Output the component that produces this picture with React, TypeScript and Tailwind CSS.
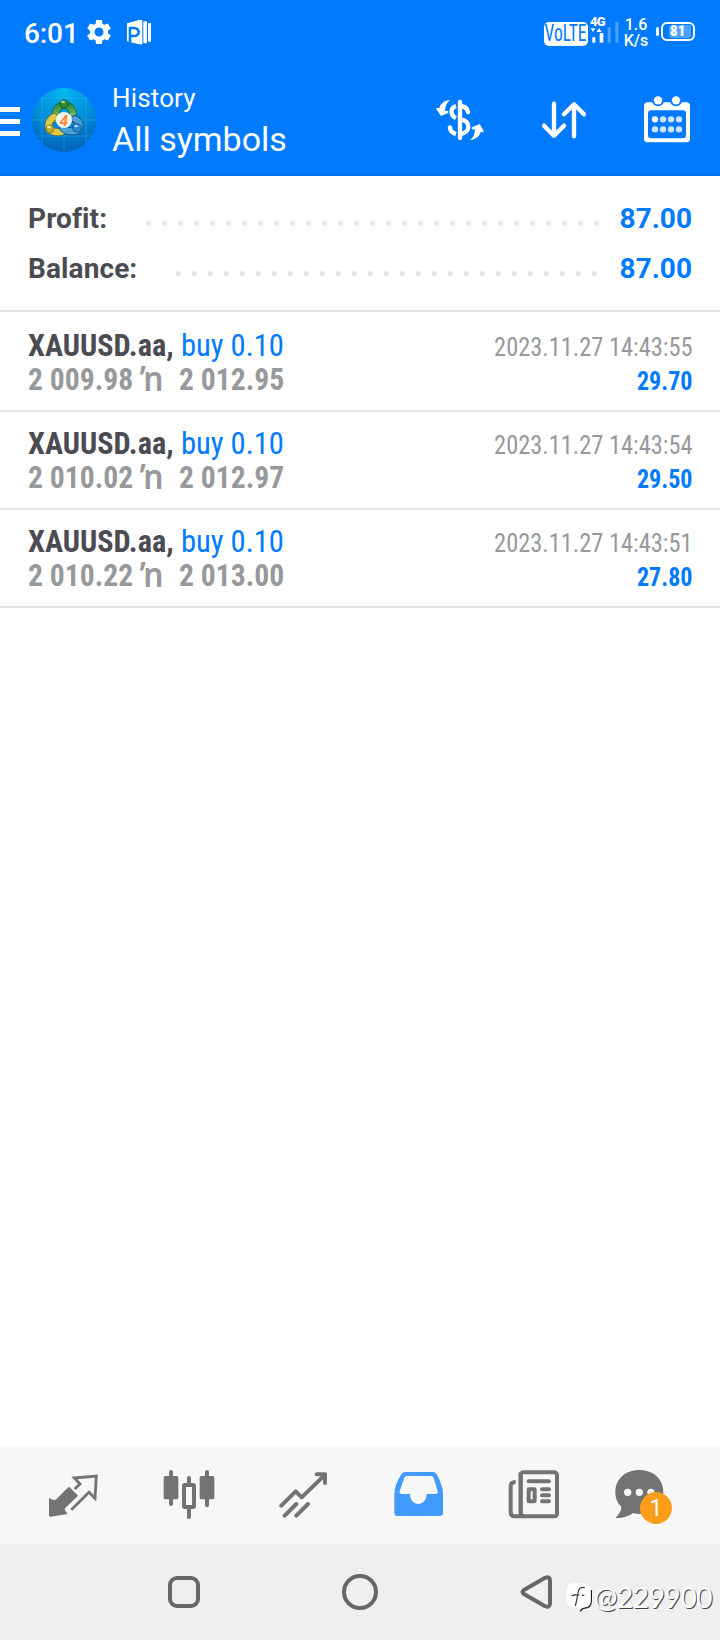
import React from 'react';

const summary = [
  { label: 'Profit:', value: '87.00', dots: 29, offset: 'mr-[22px]' },
  { label: 'Balance:', value: '87.00', dots: 27, offset: 'mr-[24px]' },
];

const deals = [
  { symbol: 'XAUUSD.aa,', side: 'buy 0.10', open: '2 009.98', close: '2 012.95', time: '2023.11.27 14:43:55', profit: '29.70' },
  { symbol: 'XAUUSD.aa,', side: 'buy 0.10', open: '2 010.02', close: '2 012.97', time: '2023.11.27 14:43:54', profit: '29.50' },
  { symbol: 'XAUUSD.aa,', side: 'buy 0.10', open: '2 010.22', close: '2 013.00', time: '2023.11.27 14:43:51', profit: '27.80' },
];

const GearIcon = () => (
  <svg className="w-[30px] h-[30px]" viewBox="0 0 24 24" fill="#fff">
    <path d="M19.14 12.94c.04-.3.06-.61.06-.94 0-.32-.02-.64-.07-.94l2.03-1.58a.49.49 0 0 0 .12-.61l-1.92-3.32a.488.488 0 0 0-.59-.22l-2.39.96c-.5-.38-1.03-.7-1.62-.94l-.36-2.54a.484.484 0 0 0-.48-.41h-3.84c-.24 0-.43.17-.47.41l-.36 2.54c-.59.24-1.13.57-1.62.94l-2.39-.96c-.22-.08-.47 0-.59.22L2.74 8.87c-.12.21-.08.47.12.61l2.03 1.58c-.05.3-.09.63-.09.94s.02.64.07.94l-2.03 1.58a.49.49 0 0 0-.12.61l1.92 3.32c.12.22.37.29.59.22l2.39-.96c.5.38 1.03.7 1.62.94l.36 2.54c.05.24.24.41.48.41h3.84c.24 0 .44-.17.47-.41l.36-2.54c.59-.24 1.13-.56 1.62-.94l2.39.96c.22.08.47 0 .59-.22l1.92-3.32c.12-.22.07-.47-.12-.61l-2.01-1.58zM12 15.6A3.61 3.61 0 0 1 8.4 12c0-1.98 1.62-3.6 3.6-3.6s3.6 1.62 3.6 3.6-1.62 3.6-3.6 3.6z" />
  </svg>
);

const PIcon = () => (
  <svg className="w-[24px] h-[25px]" viewBox="0 0 72 75">
    <path d="M0 10 L36 0 H46 V73 H36 L0 64 Z" fill="#fff" />
    <path d="M9 66 V24 H20 C40 24 40 48 20 48 H9" fill="none" stroke="#007aff" strokeWidth="8" />
    <path d="M13 32 H17 C26 32 26 41 17 41 H13 Z" fill="#fff" />
    <rect x="49" y="4" width="11" height="66" rx="3" fill="#fff" />
    <rect x="63" y="9" width="9" height="56" rx="3" fill="#fff" />
  </svg>
);

const SignalIcon = () => (
  <svg className="w-[29px] h-[26px]" viewBox="0 0 87 78">
    <path d="M2 34 H16 L9 45 Z M20 45 L27 33 L35 45 Z" fill="#fff" />
    <rect x="7" y="60" width="9" height="17" rx="2" fill="#fff" />
    <rect x="29" y="48" width="11" height="29" rx="2" fill="#fff" />
    <rect x="53" y="30" width="9" height="47" rx="2" fill="#4da2ff" />
    <rect x="76" y="14" width="9" height="63" rx="2" fill="#4da2ff" />
  </svg>
);

const Logo = () => (
  <svg className="w-16 h-16" viewBox="0 0 64 64">
    <defs>
      <radialGradient id="sky" cx="50%" cy="5%" r="95%">
        <stop offset="0" stopColor="#00b6f0" />
        <stop offset="0.5" stopColor="#0090dc" />
        <stop offset="1" stopColor="#0063b8" />
      </radialGradient>
      <linearGradient id="green" x1="0" y1="0" x2="0" y2="1">
        <stop offset="0" stopColor="#2f8f3c" />
        <stop offset="1" stopColor="#8cc96e" />
      </linearGradient>
    </defs>
    <circle cx="32" cy="32" r="32" fill="url(#sky)" />
    <path d="M10 9V55M32 0V64M54 9V55M9 10H55M0 32H64M4 48H60" stroke="#45b8ee" strokeWidth="0.7" opacity="0.5" />
    <g strokeLinecap="round" fill="none">
      <path d="M24 31 C22 21 28 17 32 17 C38 17 42 22 41 31" stroke="#17562b" strokeWidth="7.6" />
      <path d="M24 31 C22 21 28 17 32 17 C38 17 42 22 41 31" stroke="url(#green)" strokeWidth="6.2" />
      <path d="M22 29 C15 33 15 41 20 43 C25 45 30 44 33 42" stroke="#77701a" strokeWidth="7.6" />
      <path d="M22 29 C15 33 15 41 20 43 C25 45 30 44 33 42" stroke="#d9cb48" strokeWidth="6.2" />
      <path d="M43 31 C49 34 49 41 44 43 C39 44 34 43 31 40" stroke="#0c477f" strokeWidth="7.6" />
      <path d="M43 31 C49 34 49 41 44 43 C39 44 34 43 31 40" stroke="#48a0d8" strokeWidth="6.2" />
    </g>
    <circle cx="32" cy="16" r="4.3" fill="#2a873b" stroke="#17562b" strokeWidth="0.7" />
    <circle cx="18" cy="41" r="4" fill="#b8a82c" stroke="#77701a" strokeWidth="0.7" />
    <circle cx="45" cy="40" r="4.3" fill="#2588cb" stroke="#0c477f" strokeWidth="0.7" />
    <ellipse cx="31" cy="14" rx="2" ry="1.2" fill="#9fd895" />
    <ellipse cx="17" cy="39" rx="2" ry="1.2" fill="#f4eca0" />
    <ellipse cx="44" cy="38" rx="2" ry="1.2" fill="#a8dcf8" />
    <circle cx="32" cy="32" r="8" fill="#f2f0f0" />
    <text x="32" y="37.5" textAnchor="middle" fontFamily="Roboto" fontWeight="700" fontStyle="italic" fontSize="15" fill="#f58a2c">4</text>
  </svg>
);

const DollarIcon = () => (
  <svg className="w-[48px] h-[42px]" viewBox="0 0 144 126">
    <g fill="none" stroke="#fff" strokeWidth="13" strokeLinecap="round">
      <path d="M72 9 V117" />
      <path d="M96 39 C94 27 86 22 73 21" />
      <path d="M60 21 C42 27 42 48 60 57" strokeLinecap="butt" />
      <path d="M74 61 C90 64 97 73 97 83 C97 94 88 103 74 105" />
      <path d="M42 86 C43 96 50 102 60 105" strokeLinecap="butt" />
    </g>
    <circle cx="42" cy="85" r="6.5" fill="#fff" />
    <path d="M42 3 C26 4 14 13 10 27 L1 27 L2 32 L15 51 L36 42 L37 37 L27 35 C28 22 32 12 42 3 Z" fill="#fff" />
    <path d="M102 123 C118 122 130 113 134 99 L143 100 L142 94 L131 75 L108 85 L107 90 L117 92 C117 104 112 115 102 123 Z" fill="#fff" />
  </svg>
);

const SortIcon = () => (
  <svg className="w-[44px] h-[38px]" viewBox="0 0 132 114" fill="none" stroke="#fff" strokeWidth="13" strokeLinecap="round" strokeLinejoin="round">
    <path d="M36 8 V104 M6 74 L36 104 L66 74" />
    <path d="M96 106 V10 M66 40 L96 10 L126 40" />
  </svg>
);

const CalendarIcon = () => (
  <svg className="w-[46px] h-[47px]" viewBox="0 0 138 141">
    <rect x="0" y="19" width="138" height="120" rx="11" fill="#fff" />
    <rect x="12" y="43" width="114" height="84" rx="10" fill="#007aff" />
    <circle cx="42" cy="13" r="18" fill="#007aff" />
    <circle cx="96" cy="13" r="18" fill="#007aff" />
    <circle cx="42" cy="13" r="12.5" fill="#fff" />
    <circle cx="96" cy="13" r="12.5" fill="#fff" />
    {[70, 100].map((y) =>
      [33, 57, 81, 105].map((x) => (
        <circle key={`${x}-${y}`} cx={x} cy={y} r="9.5" fill={x === 33 && y === 70 ? '#fff' : '#cfe4ff'} />
      ))
    )}
  </svg>
);

const QuotesIcon = () => (
  <svg className="w-[50px] h-[44px]" viewBox="0 0 150 132">
    <path d="M61 40 Q63 38 65 40 L90 65 L51 103 L50 108 L59 120 L7 128 Q3 128 3 124 V72 L16 78 L23 77 Z" fill="#737373" />
    <path d="M80 45 L96 30 L79 12 L145 6 L141 73 L123 55 L70 107" fill="none" stroke="#737373" strokeWidth="8.5" />
  </svg>
);

const ChartIcon = () => (
  <svg className="w-[52px] h-[50px]" viewBox="0 0 156 150">
    <path d="M24 6 V102 M132 6 V106 M78 24 V45 M78 116 V141" stroke="#737373" strokeWidth="12" strokeLinecap="round" />
    <rect x="2" y="18" width="44" height="70" rx="5" fill="#737373" />
    <rect x="110" y="18" width="44" height="70" rx="5" fill="#737373" />
    <rect x="63" y="45" width="30" height="66" rx="2" fill="#f7f7f7" stroke="#737373" strokeWidth="12" />
  </svg>
);

const TradeIcon = () => (
  <svg className="w-[48px] h-[46px]" viewBox="0 0 144 138" fill="none" stroke="#737373" strokeWidth="12" strokeLinecap="round" strokeLinejoin="round">
    <path d="M7 101 L50 58 L68 76 L136 10" />
    <path d="M113 7 H138 V33" />
    <path d="M17 131 L52 96 M52 131 L87 96" />
  </svg>
);

const HistoryIcon = () => (
  <svg className="w-[50px] h-[44px]" viewBox="0 0 150 132">
    <path fillRule="evenodd" d="M34 0 H116 Q124 0 128 7 Q147 42 147 66 V123 Q147 132 138 132 H10 Q1 132 1 123 V66 Q1 40 22 7 Q26 0 34 0 Z M38 12 Q33 12 31 17 L17 58 Q15 66 24 66 H48 C48 106 98 106 98 66 H124 Q133 66 131 58 L119 17 Q117 12 111 12 Z" fill="#419bff" />
  </svg>
);

const NewsIcon = () => (
  <svg className="w-[52px] h-[49px]" viewBox="0 0 156 147" fill="none" stroke="#737373" strokeWidth="12" strokeLinecap="round">
    <path d="M38 7 V138" strokeLinecap="butt" />
    <rect x="38" y="7" width="109" height="132" rx="8" />
    <path d="M23 36 Q8 36 8 48 V127 Q8 139 20 139 H50" strokeLinecap="butt" />
    <path d="M62 34 H123 M102 58 H123 M102 76 H123 M102 94 H123" strokeWidth="12" />
    <rect x="62" y="58" width="18" height="36" rx="1" strokeWidth="12" />
  </svg>
);

const ChatIcon = () => (
  <svg className="w-[49px] h-[49px]" viewBox="0 0 147 147">
    <path d="M73 0 C116 0 145 28 145 66 C145 106 116 132 77 132 C68 132 62 131 55 129 C40 140 20 145 1 144 C12 133 19 122 19 110 C6 98 1 83 1 66 C1 28 30 0 73 0 Z" fill="#737373" />
    <g fill="#f7f7f7">
      <circle cx="38" cy="67" r="11" />
      <circle cx="73" cy="67" r="11" />
      <circle cx="108" cy="67" r="11" />
    </g>
  </svg>
);

const App: React.FC = () => {
  return (
    <div className="relative w-[720px] h-[1640px] flex flex-col bg-white overflow-hidden font-[Roboto,sans-serif]">
      <header className="h-[176px] shrink-0 bg-[#007aff] border-b-2 border-[#006fe8] text-white">
        {/* Status bar */}
        <div className="h-16 flex items-start pl-6 pr-[25px]">
          <span className="mt-[17px] w-[60px] text-[28px] leading-[34px] font-medium tracking-[-0.1px]">6:01</span>
          <div className="mt-[17px]"><GearIcon /></div>
          <div className="mt-[20px] ml-[13px]"><PIcon /></div>
          <div className="ml-auto flex items-start">
            <div className="mt-[22px] w-[44px] h-[24px] rounded-[5px] bg-white text-[#007aff] flex items-center justify-center">
              <span className="shrink-0 scale-x-[0.76] text-[23px] leading-[26px] font-['Roboto_Condensed']">VoLTE</span>
            </div>
            <div className="relative mt-[17px] ml-[2px]">
              <SignalIcon />
              <span className="absolute left-0 top-[-1px] text-[13px] leading-3 font-black tracking-[-0.7px]">4G</span>
            </div>
            <div className="mt-[17px] ml-[4px] w-[26px] text-center text-[16px] leading-[16px] font-medium whitespace-nowrap">
              <div>1.6</div>
              <div>K/s</div>
            </div>
            <div className="mt-[27px] ml-[7px] w-[3px] h-[9px] rounded-sm bg-white" />
            <div className="mt-[22px] ml-[2px] w-[34px] h-[19px] p-[1px] rounded-[6px] border-2 border-white flex">
              <div className="ml-[5px] w-[22px] rounded-[3px] bg-[#4da2ff] flex items-center">
                <span className="ml-[1px] text-[15px] leading-[13px] font-black font-['Roboto_Condensed']">81</span>
              </div>
            </div>
          </div>
        </div>

        {/* App bar */}
        <div className="flex h-[110px] items-start">
          <div className="mt-[43px] w-5 flex flex-col gap-[7px]">
            <div className="h-[5px] bg-white" />
            <div className="h-[5px] bg-white" />
            <div className="h-[5px] bg-white" />
          </div>
          <div className="mt-6 ml-3"><Logo /></div>
          <div className="mt-[19px] ml-4">
            <div className="text-[26px] leading-[30px] tracking-[0.15px]">History</div>
            <div className="mt-[3px] text-[34px] leading-[46px]">All symbols</div>
          </div>
          <div className="ml-auto mr-[30px] flex">
            <div className="mt-[35px]"><DollarIcon /></div>
            <div className="mt-[37px] ml-[58px]"><SortIcon /></div>
            <div className="mt-[32px] ml-[58px]"><CalendarIcon /></div>
          </div>
        </div>
      </header>

      <section className="h-[136px] shrink-0 pt-[17px] pl-7 pr-7 border-b-2 border-[#e4e4e6]">
        {summary.map((row) => (
          <div key={row.label} className="h-[50px] flex items-start text-[28px] leading-[52px] font-bold">
            <span className="text-[#4b4b53] tracking-[0.1px]">{row.label}</span>
            <div className={`ml-auto mt-[28px] flex gap-[11px] ${row.offset}`}>
              {Array.from({ length: row.dots }, (_, i) => (
                <div key={i} className="w-[5px] h-[5px] rounded-full bg-[#e4e4e6]" />
              ))}
            </div>
            <span className="w-[71px] flex justify-end text-[#007aff]">{row.value}</span>
          </div>
        ))}
      </section>

      <main className="flex-1 pt-[2px] font-['Roboto_Condensed',Roboto,sans-serif]">
        {deals.map((deal) => (
          <div key={deal.time} className="h-[98px] pl-7 pr-[27px] flex justify-between border-b-2 border-[#e4e4e6] whitespace-nowrap">
            <div className="pt-[14px] text-[32px] leading-[34px]">
              <div className="flex">
                <div className="w-[153px]">
                  <span className="inline-block origin-left scale-x-[0.945] font-bold text-[#4b4b53]">{deal.symbol}</span>
                </div>
                <span className="inline-block origin-left scale-x-[0.955] text-[#007aff]">{deal.side}</span>
              </div>
              <div className="flex h-[34px] font-bold text-[#97989c]">
                <div className="w-[112px]">
                  <span className="inline-block origin-left scale-x-[0.925]">{deal.open}</span>
                </div>
                <div className="w-[39px]">
                  <span className="block origin-left scale-x-[0.93] text-[34px] leading-[32px] font-['Noto_Sans'] font-semibold">ŉ</span>
                </div>
                <span className="inline-block origin-left scale-x-[0.925]">{deal.close}</span>
              </div>
            </div>
            <div className="pt-4 text-right text-[26px] leading-[34px]">
              <div className="origin-right scale-x-[0.938] text-[#97989c]">{deal.time}</div>
              <div className="origin-right scale-x-[0.925] font-bold text-[#007aff]">{deal.profit}</div>
            </div>
          </div>
        ))}
      </main>

      <nav className="h-[98px] shrink-0 bg-[#f7f7f7] flex items-start">
        <div className="mt-7 ml-12"><QuotesIcon /></div>
        <div className="mt-6 ml-[65px]"><ChartIcon /></div>
        <div className="mt-[26px] ml-[64px]"><TradeIcon /></div>
        <div className="mt-[26px] ml-[67px]"><HistoryIcon /></div>
        <div className="mt-6 ml-[64px]"><NewsIcon /></div>
        <div className="relative mt-6 ml-[55px]">
          <ChatIcon />
          <div className="absolute left-[25px] top-[22px] w-8 h-8 rounded-full bg-[#ff9c1a] text-white text-[23px] leading-[33px] text-center">1</div>
        </div>
      </nav>

      {/* System navigation */}
      <div className="h-24 shrink-0 bg-[#efefef] flex items-start">
        <div className="mt-8 ml-[168px] w-8 h-8 rounded-[9px] border-4 border-[#666]" />
        <div className="mt-[30px] ml-[142px] w-9 h-9 rounded-full border-4 border-[#666]" />
        <svg className="mt-[30px] ml-[142px] w-[34px] h-[36px]" viewBox="0 0 102 108">
          <path d="M13 47 L74 12 Q90 5 90 20 V88 Q90 103 74 96 L13 61 Q2 54 13 47 Z" fill="none" stroke="#666" strokeWidth="12" />
        </svg>
      </div>

      {/* Watermark over the system navigation */}
      <div className="absolute left-[566px] top-[1582px] flex items-start">
        <svg className="w-[26px] h-[32px]" viewBox="0 0 78 96">
          <path d="M42 88 L50 80 L66 76 Q76 70 76 56 V24" fill="none" stroke="#222" strokeWidth="4" />
          <path d="M20 4 H56 Q74 4 74 22 V56 Q74 70 60 74 Q46 76 40 84 L38 74 H20 Q2 74 2 56 V22 Q2 4 20 4 Z" fill="#fff" />
          <path d="M56 17 Q40 13 37 28 Q32 56 28 72 M17 42 Q24 37 34 39 H40 M48 40 H55" fill="none" stroke="#333" strokeWidth="3.5" />
        </svg>
        <span className="mt-[-2px] ml-[2px] text-[28px] leading-[34px] tracking-[-0.4px] font-normal text-white font-[Lato,sans-serif] [text-shadow:1px_1px_0_#444]">@229900</span>
      </div>
    </div>
  );
};

export default App;
